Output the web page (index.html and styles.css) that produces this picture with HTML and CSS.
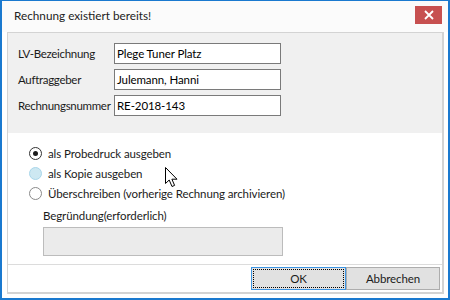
FILE: index.html
```html
<!DOCTYPE html>
<html>
<head>
  <title>Rechnung existiert bereits!</title>
  <link rel="stylesheet" href="styles.css">
</head>
<body>

  <div class="window">
    <div class="titlebar">
      <span class="title">Rechnung existiert bereits!</span>
      <div class="close">
        <svg width="10" height="10" viewBox="0 0 10 10">
          <path d="M1 1 L9 9 M9 1 L1 9" stroke="#fff" stroke-width="1.8"/>
        </svg>
      </div>
    </div>

    <div class="panel">
      <div class="fields">
        <label>LV-Bezeichnung</label>
        <div class="field">Plege Tuner Platz</div>
        <label>Auftraggeber</label>
        <div class="field">Julemann, Hanni</div>
        <label>Rechnungsnummer</label>
        <div class="field">RE-2018-143</div>
      </div>

      <div class="options">
        <div class="option"><span class="radio checked"></span>als Probedruck ausgeben</div>
        <div class="option"><span class="radio hover"></span>als Kopie ausgeben</div>
        <div class="option"><span class="radio"></span>Überschreiben (vorherige Rechnung archivieren)</div>
        <div class="reason">
          <div class="reason-label">Begründung(erforderlich)</div>
          <div class="reason-box"></div>
        </div>
      </div>

      <div class="buttons">
        <button class="default"><span>OK</span></button>
        <button>Abbrechen</button>
      </div>
    </div>

    <svg class="cursor" width="14" height="21" viewBox="0 0 14 21">
      <path d="M0.5 0.5 L0.5 16.5 L4.2 13 L7 19.5 L9.6 18.4 L6.9 12.2 L12 12.2 Z" fill="#fff" stroke="#000" stroke-width="1" stroke-linejoin="miter"/>
    </svg>
  </div>

</body>
</html>
```

FILE: styles.css
```css
body {
  margin: 0;
  font-family: 'Lato', 'Noto Sans', sans-serif;
  font-size: 11.5px;
  letter-spacing: -0.1px;
  color: #1b1b1b;
  background: #fff;
}

.window {
  position: relative;
  width: 450px;
  height: 300px;
  box-sizing: border-box;
  border: 2px solid #1a79cf;
  border-top-width: 1px;
  background: #fff;
  display: flex;
  flex-direction: column;
}

.titlebar {
  height: 31px;
  display: flex;
  align-items: center;
  justify-content: space-between;
  padding: 0 6px 0 12px;
  background: #fbfbfb;
}

.title {
  font-size: 11.75px;
  letter-spacing: 0;
  color: #222;
  margin-top: -2px;
}

.close {
  width: 27px;
  height: 18px;
  background: #c75050;
  display: flex;
  align-items: center;
  justify-content: center;
  margin-top: -3px;
}

.panel {
  margin: 0 4px 4px 5px;
  border: 1px solid #d3d3d3;
  border-right-width: 2px;
  border-bottom-width: 2px;
  display: flex;
  flex-direction: column;
  flex: 1;
}

.fields {
  background: #f0f0f0;
  padding: 10px 0 17px 10px;
  display: grid;
  grid-template-columns: 96px 167px;
  row-gap: 5px;
  align-items: center;
}

.fields label {
  letter-spacing: -0.3px;
}

.field {
  height: 21px;
  box-sizing: border-box;
  border: 1px solid #7a7a7a;
  background: #fff;
  padding: 0 2px;
  line-height: 19px;
  color: #000;
}

.options {
  padding: 10px 0 8px 21px;
  display: flex;
  flex-direction: column;
  border-bottom: 1px solid #dcdcdc;
}

.option {
  height: 20px;
  display: flex;
  align-items: center;
}

.radio {
  width: 13px;
  height: 13px;
  box-sizing: border-box;
  border: 1px solid #8a8a8a;
  border-radius: 50%;
  background: #fff;
  margin-right: 6px;
  position: relative;
}

.radio.checked {
  border-color: #333;
}

.radio.checked::after {
  content: "";
  position: absolute;
  left: 3px;
  top: 3px;
  width: 5px;
  height: 5px;
  border-radius: 50%;
  background: #1b1b1b;
}

.radio.hover {
  border-color: #a9d6ea;
  background: #cde8f2;
}

.reason {
  margin: 5px 0 0 14px;
}

.reason-label {
  height: 16px;
  line-height: 16px;
  margin-bottom: 3px;
}

.reason-box {
  width: 240px;
  height: 29px;
  box-sizing: border-box;
  border: 1px solid #bcbcbc;
  background: #ebebeb;
}

.buttons {
  display: flex;
  justify-content: flex-end;
  padding: 2px 2px 0 0;
}

.buttons button {
  width: 94px;
  height: 23px;
  box-sizing: border-box;
  border: 1px solid #adadad;
  background: #e1e1e1;
  font-family: inherit;
  font-size: 11.5px;
  letter-spacing: -0.1px;
  color: #1b1b1b;
  padding: 0;
  margin: 0;
}

.buttons button.default {
  width: 95px;
  border: 1px solid #3d95e3;
  padding: 1px;
}

.buttons button.default span {
  display: block;
  height: 100%;
  box-sizing: border-box;
  border: 1px dotted #000;
  line-height: 17px;
}

.cursor {
  position: absolute;
  left: 163px;
  top: 166px;
}
```
